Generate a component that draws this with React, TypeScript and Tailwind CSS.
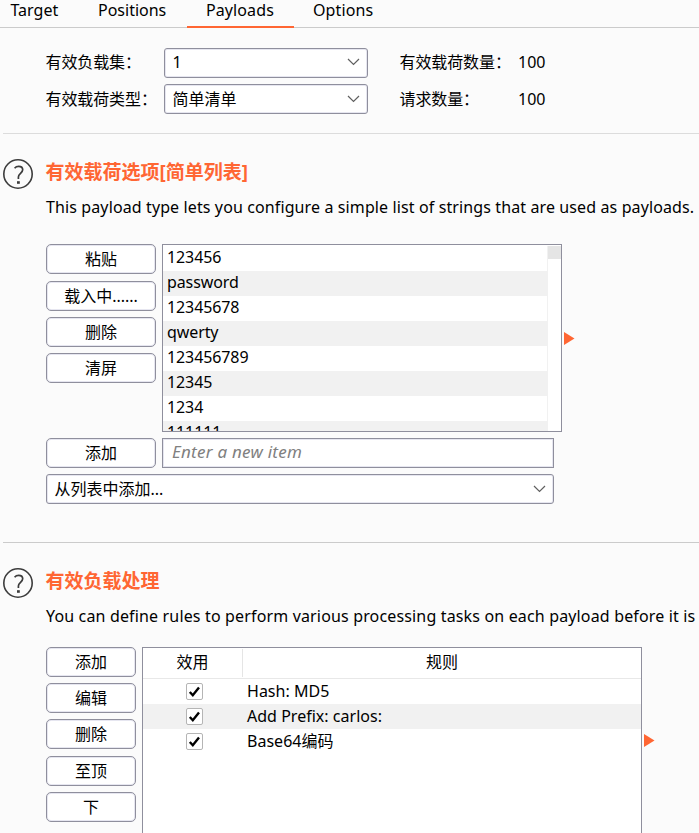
import type { ReactNode } from "react";

const payloads = ["123456", "password", "12345678", "qwerty", "123456789", "12345", "1234", "111111"];
const rules = ["Hash: MD5", "Add Prefix: carlos:", "Base64编码"];

function Chevron() {
  return (
    <svg width="13" height="8" viewBox="0 0 13 8" className="shrink-0" fill="none" stroke="#606060" strokeWidth="1.2">
      <path d="M1 1L6.5 6.5L12 1" />
    </svg>
  );
}

function Select({ children, className }: { children: ReactNode; className: string }) {
  return (
    <div className={`flex h-[30px] items-center justify-between rounded-[3px] border border-[#8f8f9d] bg-white pr-[7px] pl-[7.5px] shadow-[inset_0_0_0_1px_#e6e6f0] ${className}`}>
      <span>{children}</span>
      <Chevron />
    </div>
  );
}

function Button({ children, className }: { children: ReactNode; className: string }) {
  return (
    <button className={`flex h-[30px] shrink-0 items-center justify-center rounded-[5px] border border-[#8f8f9d] bg-white pb-px shadow-[inset_0_0_0_1px_#e6e6f0] ${className}`}>
      {children}
    </button>
  );
}

function Help() {
  return (
    <svg width="30" height="30" viewBox="0 0 30 30" className="shrink-0" fill="none" stroke="#3c3c3c">
      <circle cx="15" cy="15" r="14.2" strokeWidth="1.6" />
      <path d="M11.6 9.2C12.6 8 14 7.4 15.7 7.4C18.1 7.4 19.7 8.6 19.7 10.8C19.7 14 15.4 14.8 15.4 18V20" strokeWidth="1.7" />
      <rect x="14" y="22.2" width="2.8" height="2.6" fill="#3c3c3c" stroke="none" />
    </svg>
  );
}

function Arrow({ className }: { className: string }) {
  return (
    <svg width="11" height="13" viewBox="0 0 11 13" className={`shrink-0 ${className}`} fill="#ff6633">
      <path d="M0 0L10.5 6.5L0 13Z" />
    </svg>
  );
}

function SectionHead({ title, children }: { title: string; children: ReactNode }) {
  return (
    <div className="flex h-[61px] pl-[3px]">
      <Help />
      <div className="ml-[13px] whitespace-nowrap">
        <h2 className="-ml-[0.5px] h-[26px] text-[19px] leading-[26px] font-bold text-[#ff6633]">{title}</h2>
        <p className="mt-[9px] leading-[26px]">{children}</p>
      </div>
    </div>
  );
}

export default function App() {
  return (
    <div className="h-[833px] w-[699px] overflow-hidden bg-[#fbfbfb] font-['Noto_Sans','Noto_Sans_CJK_SC',sans-serif] text-[16px] leading-6 text-black">
      <nav className="flex h-7 border-b border-[#cbcbcb] leading-5">
        <span className="w-[88px] pl-[10.5px]">Target</span>
        <span className="w-[99px] pl-[10px]">Positions</span>
        <span className="h-7 w-[107px] border-b-2 border-[#ff6633] pl-[19px] tracking-[0.1px]">Payloads</span>
        <span className="pl-[19px] tracking-[0.1px]">Options</span>
      </nav>

      <div className="grid h-[105px] grid-cols-[118px_204px_32px_118px_1fr] grid-rows-[30px_30px] items-center gap-y-[6px] pt-5 pl-[46px]">
        <span className="-ml-[0.5px] pb-[2px] tracking-[-0.1px]">有效负载集：</span>
        <Select className="w-[204px] pb-[2px]">1</Select>
        <span />
        <span className="-ml-[0.5px] pb-[2px] tracking-[-0.1px]">有效载荷数量：</span>
        <span className="pb-[2px]">100</span>
        <span className="-ml-[0.5px] tracking-[-0.1px] whitespace-nowrap">有效载荷类型：</span>
        <Select className="w-[204px]">简单清单</Select>
        <span />
        <span className="-ml-[0.5px] tracking-[-0.1px]">请求数量：</span>
        <span>100</span>
      </div>
      <div className="ml-[3px] h-px bg-[#dcdcdc]" />

      <section className="pt-[25px]">
        <SectionHead title="有效载荷选项[简单列表]">
          <span className="tracking-[0.115px]">
            This payload type lets you configure a simple list of strings that are used as payloads.
          </span>
        </SectionHead>
        <div className="mt-6 flex pl-[46px]">
          <div className="flex w-[116px] flex-col gap-[6px]">
            <Button className="mb-px w-[110px]">粘贴</Button>
            <Button className="w-[110px]">载入中......</Button>
            <Button className="w-[110px]">删除</Button>
            <Button className="w-[110px]">清屏</Button>
          </div>
          <div className="flex h-[188px] w-[400px] overflow-hidden border border-[#8f8f9d] bg-white pt-px">
            <ul className="w-[385px] border-r border-[#f1f1f1]">
              {payloads.map((p) => (
                <li key={p} className="h-[25px] pl-1 leading-[22px] tracking-[-0.1px] even:bg-[#f1f1f1]">
                  {p}
                </li>
              ))}
            </ul>
            <div className="h-[13px] flex-1 bg-[#e5e5e5]" />
          </div>
          <Arrow className="mt-[88px] ml-[2px]" />
        </div>
        <div className="mt-[6px] flex gap-[6px] pl-[46px]">
          <Button className="w-[110px]">添加</Button>
          <div className="flex h-[30px] w-[392px] items-center border border-[#8f8f9d] bg-white pb-[2px] pl-[9px] text-[17px] tracking-[0.25px] text-[#808080] italic shadow-[inset_0_0_0_1px_#e6e6f0]">
            Enter a new item
          </div>
        </div>
        <Select className="mt-[6px] ml-[46px] w-[508px]">从列表中添加...</Select>
      </section>
      <div className="mt-[38px] ml-[3px] h-px bg-[#cbcbcb]" />

      <section className="pt-[25px]">
        <SectionHead title="有效负载处理">
          <span className="tracking-[0.155px]">
            You can define rules to perform various processing tasks on each payload before it is
          </span>
        </SectionHead>
        <div className="mt-[18px] flex pl-[46px]">
          <div className="flex w-[96px] flex-col gap-[6px]">
            <Button className="w-[90px]">添加</Button>
            <Button className="w-[90px]">编辑</Button>
            <Button className="mb-px w-[90px]">删除</Button>
            <Button className="w-[90px]">至顶</Button>
            <Button className="w-[90px]">下</Button>
          </div>
          <div className="h-[200px] w-[500px] border border-[#8f8f9d] bg-white">
            <div className="flex h-[31px] border-b border-[#e8e8e8] text-center leading-[28px]">
              <span className="my-px w-[100px] border-r border-[#e5e5e5] leading-[26px]">效用</span>
              <span className="flex-1">规则</span>
            </div>
            {rules.map((r) => (
              <div key={r} className="flex h-[25px] items-center leading-6 odd:bg-[#f1f1f1] even:bg-white">
                <span className="mr-[44px] ml-[43px] flex h-[17px] w-[17px] items-center justify-center rounded-[2px] border border-[#b5b5b5] bg-white">
                  <svg width="13" height="13" viewBox="0 0 13 13" fill="none" stroke="#000" strokeWidth="2.4">
                    <path d="M1.8 7L4.8 10.2L11 2.5" />
                  </svg>
                </span>
                <span className="pb-[2px] tracking-[0.02px]">{r}</span>
              </div>
            ))}
          </div>
          <Arrow className="mt-[87px] ml-[2px]" />
        </div>
      </section>
    </div>
  );
}
